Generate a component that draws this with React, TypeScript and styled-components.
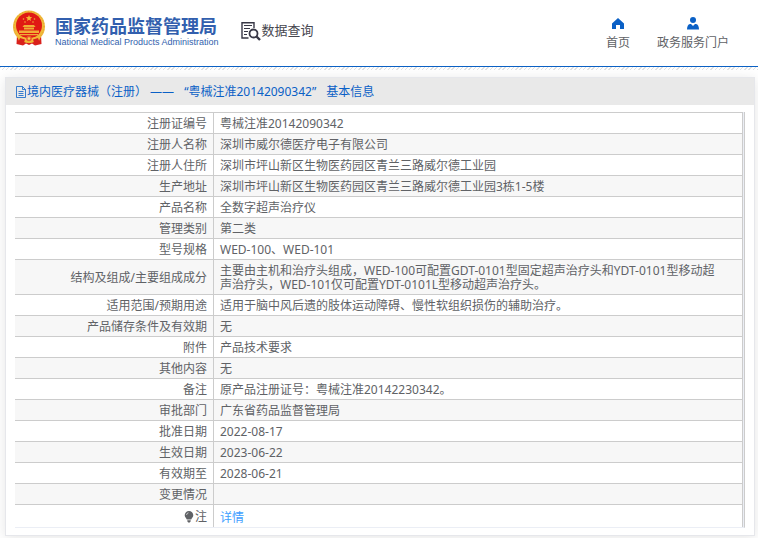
import React from "react";
import styled, { createGlobalStyle } from "styled-components";

const GlobalStyle = createGlobalStyle`
  *, *::before, *::after { box-sizing: border-box; }
  body {
    margin: 0;
    background: #fff;
    color: #606266;
    font: 12px/14px "Noto Sans", "Noto Sans CJK SC", sans-serif;
  }
  a { color: inherit; text-decoration: none; }
`;

const Header = styled.header`
  display: flex;
  align-items: flex-start;
  height: 67px;
  padding: 10px 29px 0 12px;
  border-bottom: 1px solid #0b61c4;
`;

const Brand = styled.a`
  display: flex;
  gap: 9px;
  color: #325fae;
  white-space: nowrap;
`;

const BrandText = styled.span`
  display: flex;
  flex-direction: column;
  padding-top: 4px;
`;

const BrandName = styled.strong`
  font: 700 18px/22px "Noto Sans CJK SC", sans-serif;
`;

const BrandSub = styled.span`
  font: 400 9px/12px "Liberation Sans", sans-serif;
`;

const Section = styled.h1`
  display: flex;
  gap: 1px;
  margin: 11px 0 0 22px;
  color: #46464e;
  font: 400 13px/18px "Noto Sans CJK SC", sans-serif;
  white-space: nowrap;
`;

const Nav = styled.nav`
  display: flex;
  gap: 27px;
  margin: 6px 0 0 auto;
`;

const NavLink = styled.a`
  display: flex;
  flex-direction: column;
  align-items: center;
  gap: 6px;
  white-space: nowrap;

  svg { color: #0a60c6; }
`;

const Hatch = styled.div`
  height: 3px;
  background: repeating-linear-gradient(135deg, #e2e2e2 0 1px, #fff 1px 3px);
`;

const Panel = styled.main`
  margin: 7px 3px 2px 5px;
  border: 1px solid #e6e7eb;
  background: #fff;
  box-shadow: 0 2px 12px rgba(0, 0, 0, 0.1);
`;

const PanelTitle = styled.h2`
  display: flex;
  align-items: center;
  gap: 10px;
  height: 27px;
  margin: 0;
  padding: 0 9px;
  background: #e9e9e9;
  color: #0a60c6;
  font-size: 12px;
  font-weight: 400;
  white-space: nowrap;
`;

const TitleLead = styled.span`
  display: flex;
  align-items: center;
`;

const TableFrame = styled.div`
  margin: 7px 9px;
  padding-right: 1px;
  border-right: 1px solid #ccc;
  border-bottom: 1px solid #ebeef5;
  background: #ebeef5;
`;

const Table = styled.table`
  width: 100%;
  border-spacing: 0;
  background: #fff;

  tr:nth-child(even) { background: #f7f7f7; }
`;

const Label = styled.th`
  width: 199px;
  padding: 4px 6px 2px;
  border-top: 1px solid #ccc;
  border-right: 1px solid #ccc;
  font-weight: 400;
  text-align: right;
`;

const Value = styled.td<{ $tall?: boolean }>`
  padding: ${(p) => (p.$tall ? "6px 20px 2px 6px" : "4px 20px 2px 6px")};
  border-top: 1px solid #ccc;
  border-right: 1px solid #ccc;
`;

const NoteLabel = styled.span`
  display: inline-flex;
  align-items: center;
  gap: 1px;
  vertical-align: top;
`;

const DetailLink = styled.a`
  && { color: #409eff; }
`;

const Emblem = () => (
  <svg width="34" height="36" viewBox="0 0 34 36" aria-hidden="true">
    <path d="M5 25 4.500 34l6.500 1.500 3-2 3 1.500 3-1.500 3 2 6.500-1.500L29 25z" fill="#d9211c" />
    <circle cx="17" cy="16.500" r="16" fill="#f0b93a" />
    <circle cx="17" cy="16.500" r="15" fill="none" stroke="#e3a02d" strokeWidth="1" strokeDasharray="1 2" />
    <circle cx="17" cy="15.500" r="13" fill="#e01914" />
    <path d="m17 5 .9 2.100 2.300.2-1.800 1.500.6 2.200-2-1.200-2 1.200.6-2.200-1.800-1.500 2.300-.2z" fill="#f4b836" />
    <g fill="#f0ad35">
      <circle cx="11.500" cy="9" r=".8" />
      <circle cx="13" cy="12" r=".8" />
      <circle cx="21" cy="12" r=".8" />
      <circle cx="22.500" cy="9" r=".8" />
      <path d="M12 15h10l1.500 2h-13zM12 17.500h10v2H12zM7 20.500h20V23H7zM8 24h18v1.200H8z" />
    </g>
    <path d="M5 26c5 0 7.500 2 12 2s7-2 12-2l-2 5c-4 0-6 2-10 2s-6-2-10-2z" fill="#f1b936" />
    <path d="M8 28 6 33l6-.500 1-3zM26 28l2 5-6-.500-1-3z" fill="#d9211c" />
    <circle cx="17" cy="28.500" r="2.800" fill="#e9582d" />
    <circle cx="17" cy="28.500" r="1.300" fill="#f8cf49" />
  </svg>
);

const SearchDocIcon = () => (
  <svg width="20" height="20" viewBox="0 0 20 20" fill="none" stroke="#383846" aria-hidden="true">
    <path d="M13 7V1.700H1V17h6.500" strokeWidth="1.400" />
    <path d="M3 4.500h8M3 7.500h6M3 10.500h4M3 13.500h3" strokeWidth="1" />
    <circle cx="12.500" cy="12.500" r="4" strokeWidth="1.800" />
    <path d="m15.500 15.500 3.500 3.500" strokeWidth="2.400" />
  </svg>
);

const HomeIcon = () => (
  <svg width="14" height="14" viewBox="0 0 14 14" fill="currentColor" aria-hidden="true">
    <path d="M7 2 1 7.500V13h4V9h4v4h4V7.500z" />
  </svg>
);

const PersonIcon = () => (
  <svg width="14" height="14" viewBox="0 0 14 14" fill="currentColor" aria-hidden="true">
    <circle cx="7" cy="4" r="3" />
    <path d="M4 8h1l2 2 2-2h1c2 0 3 2.500 3 5.500H1C1 10.500 2 8 4 8z" />
  </svg>
);

const FileIcon = () => (
  <svg width="12" height="12" viewBox="0 0 12 12" fill="none" stroke="currentColor" aria-hidden="true">
    <path d="M1.500.5h6l3 3v8h-9zM7.500.5v3h3M3.500 5.500h5M3.500 7.500h5M3.500 9.500h5" strokeWidth=".8" />
  </svg>
);

const BulbIcon = () => (
  <svg width="10" height="12" viewBox="0 0 10 12" fill="#606266" aria-hidden="true">
    <path d="M5 0a4.300 4.300 0 0 1 4.300 4.300c0 2-1.600 2.800-2.100 4.200H2.800C2.300 7.100.7 6.300.7 4.300A4.300 4.300 0 0 1 5 0zM3.300 9.200h3.400v1L5.800 11.500H4.200l-.9-1.300z" />
    <path d="M2.500 4A2.500 2.500 0 0 1 4.500 1.800" fill="none" stroke="#ddd" strokeWidth=".8" />
  </svg>
);

const rows: [string, string][] = [
  ["注册证编号", "粤械注准20142090342"],
  ["注册人名称", "深圳市威尔德医疗电子有限公司"],
  ["注册人住所", "深圳市坪山新区生物医药园区青兰三路威尔德工业园"],
  ["生产地址", "深圳市坪山新区生物医药园区青兰三路威尔德工业园3栋1-5楼"],
  ["产品名称", "全数字超声治疗仪"],
  ["管理类别", "第二类"],
  ["型号规格", "WED-100、WED-101"],
  [
    "结构及组成/主要组成成分",
    "主要由主机和治疗头组成，WED-100可配置GDT-0101型固定超声治疗头和YDT-0101型移动超声治疗头，WED-101仅可配置YDT-0101L型移动超声治疗头。",
  ],
  ["适用范围/预期用途", "适用于脑中风后遗的肢体运动障碍、慢性软组织损伤的辅助治疗。"],
  ["产品储存条件及有效期", "无"],
  ["附件", "产品技术要求"],
  ["其他内容", "无"],
  ["备注", "原产品注册证号：粤械注准20142230342。"],
  ["审批部门", "广东省药品监督管理局"],
  ["批准日期", "2022-08-17"],
  ["生效日期", "2023-06-22"],
  ["有效期至", "2028-06-21"],
  ["变更情况", ""],
];

export default function App() {
  return (
    <>
      <GlobalStyle />
      <Header>
        <Brand href="#">
          <Emblem />
          <BrandText>
            <BrandName>国家药品监督管理局</BrandName>
            <BrandSub>National Medical Products Administration</BrandSub>
          </BrandText>
        </Brand>
        <Section>
          <SearchDocIcon />
          数据查询
        </Section>
        <Nav>
          <NavLink href="#">
            <HomeIcon />
            首页
          </NavLink>
          <NavLink href="#">
            <PersonIcon />
            政务服务门户
          </NavLink>
        </Nav>
      </Header>
      <Hatch />
      <Panel>
        <PanelTitle>
          <TitleLead>
            <FileIcon />
            境内医疗器械（注册） ——
          </TitleLead>
          <span>“粤械注准20142090342”</span>
          <span>基本信息</span>
        </PanelTitle>
        <TableFrame>
          <Table>
            <tbody>
              {rows.map(([label, value]) => (
                <tr key={label}>
                  <Label scope="row">{label}</Label>
                  <Value>{value}</Value>
                </tr>
              ))}
              <tr>
                <Label scope="row">
                  <NoteLabel>
                    <BulbIcon />注
                  </NoteLabel>
                </Label>
                <Value $tall>
                  <DetailLink href="#">详情</DetailLink>
                </Value>
              </tr>
            </tbody>
          </Table>
        </TableFrame>
      </Panel>
    </>
  );
}
